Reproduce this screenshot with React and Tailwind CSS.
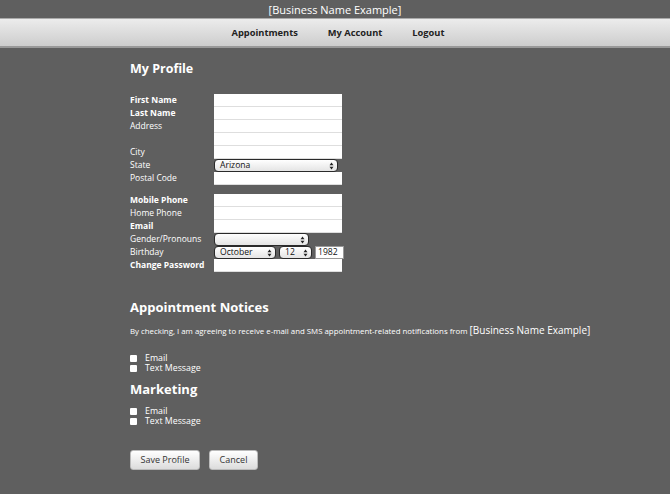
import React from 'react'

const Arrows = () => (
  <svg width="5" height="8" viewBox="0 0 5 8" className="shrink-0">
    <path d="M0.5 3.2 L2.5 0.6 L4.5 3.2 Z" fill="#222" />
    <path d="M0.5 4.8 L2.5 7.4 L4.5 4.8 Z" fill="#222" />
  </svg>
)

const Select = ({ value = '', className = '' }) => (
  <div
    className={`h-[13px] flex items-center justify-between pl-[5px] pr-[3px] rounded-[4px] border border-[#2a2a2a] bg-gradient-to-b from-white to-[#e4e4e4] text-[8.6px] leading-none text-[#111] ${className}`}
  >
    <span>{value}</span>
    <Arrows />
  </div>
)

const Field = () => <div className="h-[13px] w-[128px] bg-white border-b border-[#dedede]" />

const Row = ({ label, bold, children }) => (
  <div className="flex items-center h-[13px]">
    <div className={`w-[84px] text-[8.5px] leading-none text-white ${bold ? 'font-bold' : ''}`}>{label}</div>
    {children}
  </div>
)

const Check = ({ label }) => (
  <div className="flex items-center h-[10px]">
    <div className="w-[7px] h-[7px] bg-white rounded-[1px]" />
    <span className="ml-[8px] text-[8.8px] leading-[10px] text-white">{label}</span>
  </div>
)

export default function App() {
  return (
    <div className="min-h-screen bg-[#5f5f5f] font-['Open_Sans',sans-serif]">
      {/* Top title */}
      <div className="h-[18px] flex items-center justify-center text-white text-[11px] leading-none">
        [Business Name Example]
      </div>

      {/* Nav */}
      <div className="h-[30px] border-t border-[#aaa] border-b-2 border-b-[#999] bg-gradient-to-b from-[#ececec] to-[#cdcdcd] flex items-center justify-center gap-[30px] pl-[6px] text-[9.3px] font-bold text-[#222]">
        <span>Appointments</span>
        <span>My Account</span>
        <span>Logout</span>
      </div>

      <div className="pl-[130px] pt-[12px]">
        <h1 className="text-white font-bold text-[12.5px] leading-[18px]">My Profile</h1>

        <div className="mt-[16px]">
          <Row label="First Name" bold><Field /></Row>
          <Row label="Last Name" bold><Field /></Row>
          <Row label="Address"><Field /></Row>
          <Row label=""><Field /></Row>
          <Row label="City"><Field /></Row>
          <Row label="State"><Select value="Arizona" className="w-[124px]" /></Row>
          <Row label="Postal Code"><Field /></Row>
        </div>

        <div className="mt-[9px]">
          <Row label="Mobile Phone" bold><Field /></Row>
          <Row label="Home Phone"><Field /></Row>
          <Row label="Email" bold><Field /></Row>
          <Row label="Gender/Pronouns"><Select className="w-[95px]" /></Row>
          <Row label="Birthday">
            <div className="flex items-center gap-[3px]">
              <Select value="October" className="w-[62px]" />
              <Select value="12" className="w-[33px]" />
              <div className="h-[13px] w-[29px] bg-white border border-[#999] text-[8.6px] leading-none text-[#111] flex items-center pl-[2px]">1982</div>
            </div>
          </Row>
          <Row label="Change Password" bold><Field /></Row>
        </div>

        <h2 className="mt-[26px] text-white font-bold text-[13px] leading-[18px]">Appointment Notices</h2>
        <p className="mt-[7px] text-white text-[7.85px] leading-[14px]">
          By checking, I am agreeing to receive e-mail and SMS appointment-related notifications from{' '}
          <span className="text-[10px]">[Business Name Example]</span>
        </p>

        <div className="mt-[15px]">
          <Check label="Email" />
          <Check label="Text Message" />
        </div>

        <h2 className="mt-[7px] text-white font-bold text-[13px] leading-[18px]">Marketing</h2>

        <div className="mt-[8px]">
          <Check label="Email" />
          <Check label="Text Message" />
        </div>

        <div className="mt-[24px] flex gap-[9px]">
          <button className="h-[20px] w-[70px] rounded-[3px] border border-[#bbb] bg-gradient-to-b from-white to-[#dcdcdc] text-[9px] text-[#333]">
            Save Profile
          </button>
          <button className="h-[20px] w-[49px] rounded-[3px] border border-[#bbb] bg-gradient-to-b from-white to-[#dcdcdc] text-[9px] text-[#333]">
            Cancel
          </button>
        </div>
      </div>
    </div>
  )
}
